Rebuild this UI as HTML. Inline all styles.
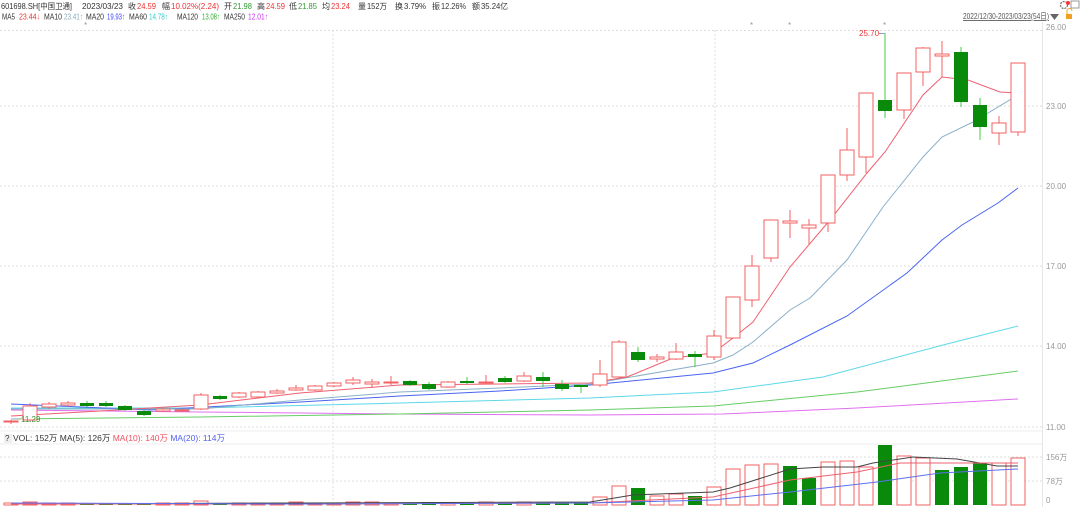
<!DOCTYPE html>
<html><head><meta charset="utf-8"><style>
body{margin:0;width:1080px;height:507px;background:#fff;overflow:hidden;font-family:"Liberation Sans","Noto Sans CJK SC",sans-serif;}
svg{position:absolute;left:0;top:0}
text{font-family:"Liberation Sans","Noto Sans CJK SC",sans-serif;}
</style></head><body>
<svg width="1080" height="507" viewBox="0 0 1080 507" xmlns="http://www.w3.org/2000/svg">
<!-- header line 1 -->
<g font-size="8" fill="#333">
<text x="1" y="9" textLength="71" lengthAdjust="spacingAndGlyphs">601698.SH[中国卫通]</text>
<text x="82" y="9" textLength="41" lengthAdjust="spacingAndGlyphs">2023/03/23</text>
<text x="128" y="9">收</text><text x="137" y="9" fill="#e33" textLength="19" lengthAdjust="spacingAndGlyphs">24.59</text>
<text x="162" y="9">幅</text><text x="171" y="9" fill="#e33" textLength="48" lengthAdjust="spacingAndGlyphs">10.02%(2.24)</text>
<text x="224" y="9">开</text><text x="233" y="9" fill="#393" textLength="19" lengthAdjust="spacingAndGlyphs">21.98</text>
<text x="257" y="9">高</text><text x="266" y="9" fill="#e33" textLength="19" lengthAdjust="spacingAndGlyphs">24.59</text>
<text x="289" y="9">低</text><text x="298" y="9" fill="#393" textLength="19" lengthAdjust="spacingAndGlyphs">21.85</text>
<text x="322" y="9">均</text><text x="331" y="9" fill="#e33" textLength="19" lengthAdjust="spacingAndGlyphs">23.24</text>
<text x="358" y="9">量</text><text x="367" y="9" textLength="20" lengthAdjust="spacingAndGlyphs">152万</text>
<text x="395" y="9">换</text><text x="404" y="9" textLength="22" lengthAdjust="spacingAndGlyphs">3.79%</text>
<text x="432" y="9">振</text><text x="441" y="9" textLength="25" lengthAdjust="spacingAndGlyphs">12.26%</text>
<text x="472" y="9">额</text><text x="481" y="9" textLength="27" lengthAdjust="spacingAndGlyphs">35.24亿</text>
</g>
<!-- header line 2 -->
<g font-size="8.5" fill="#333">
<text x="2" y="19.5" textLength="13" lengthAdjust="spacingAndGlyphs">MA5</text><text x="19" y="19.5" fill="#e33" textLength="21" lengthAdjust="spacingAndGlyphs">23.44↓</text>
<text x="44" y="19.5" textLength="18" lengthAdjust="spacingAndGlyphs">MA10</text><text x="64" y="19.5" fill="#8ab" textLength="19" lengthAdjust="spacingAndGlyphs">23.41↑</text>
<text x="86" y="19.5" textLength="18" lengthAdjust="spacingAndGlyphs">MA20</text><text x="107" y="19.5" fill="#44f" textLength="18" lengthAdjust="spacingAndGlyphs">19.93↑</text>
<text x="129" y="19.5" textLength="18" lengthAdjust="spacingAndGlyphs">MA60</text><text x="149" y="19.5" fill="#3cc" textLength="19" lengthAdjust="spacingAndGlyphs">14.78↑</text>
<text x="177" y="19.5" textLength="21" lengthAdjust="spacingAndGlyphs">MA120</text><text x="202" y="19.5" fill="#3a3" textLength="18" lengthAdjust="spacingAndGlyphs">13.08↑</text>
<text x="224" y="19.5" textLength="21" lengthAdjust="spacingAndGlyphs">MA250</text><text x="248" y="19.5" fill="#c3e" textLength="20" lengthAdjust="spacingAndGlyphs">12.01↑</text>
<text x="963" y="19" fill="#555" text-decoration="underline" textLength="86" lengthAdjust="spacingAndGlyphs">2022/12/30-2023/03/23(54日)</text>
</g>
<path d="M1050 14h9l-4.5 6z" fill="#666"/>
<rect x="1066" y="14" width="6" height="5" fill="#f0a020"/><path d="M1067 14v-3a2.5 2.5 0 0 1 5 0" stroke="#f0a020" fill="none"/>
<circle cx="1064" cy="5" r="3.5" fill="none" stroke="#777" stroke-width="1.3" stroke-dasharray="2 1"/><circle cx="1068" cy="3" r="2" fill="#f33"/>
<rect x="1071" y="1" width="8" height="7" fill="none" stroke="#999"/>
<!-- grid -->
<g stroke="#ddd" stroke-dasharray="2 2" stroke-width="1">
<line x1="0" y1="30.5" x2="1042" y2="30.5"/>
<line x1="0" y1="106" x2="1042" y2="106"/>
<line x1="0" y1="186" x2="1042" y2="186"/>
<line x1="0" y1="266" x2="1042" y2="266"/>
<line x1="0" y1="346" x2="1042" y2="346"/>
<line x1="0" y1="427" x2="1042" y2="427"/>
<line x1="0" y1="457" x2="1042" y2="457"/>
<line x1="0" y1="481" x2="1042" y2="481"/>
<line x1="333" y1="30" x2="333" y2="507"/>
<line x1="715" y1="30" x2="715" y2="507"/>
</g>
<line x1="0" y1="431" x2="1042" y2="431" stroke="#eee"/>
<line x1="0" y1="444" x2="1042" y2="444" stroke="#eee"/>
<line x1="1042.5" y1="22" x2="1042.5" y2="507" stroke="#e6e6e6"/>
<g font-size="8" fill="#999">
<text x="1046" y="30">26.00</text><text x="1046" y="109">23.00</text><text x="1046" y="189">20.00</text>
<text x="1046" y="269">17.00</text><text x="1046" y="349">14.00</text><text x="1046" y="430">11.00</text>
<text x="1046" y="460">156万</text><text x="1046" y="484">78万</text><text x="1046" y="503">0</text>
</g>
<g fill="#999" font-size="8"><text x="84" y="28">*</text><text x="750" y="28">*</text><text x="788" y="28">*</text><text x="883" y="28">*</text></g>
<!-- MA lines -->
<g fill="none" stroke-width="1">
<polyline stroke="#e070f0" points="11,410 200,412 400,414 590,415 723,414 857,408 1018,399"/>
<polyline stroke="#6c6" points="11,419 200,417 400,414 590,410 713,406 857,392 1018,371"/>
<polyline stroke="#5dd8e8" points="11,408 200,408 400,403 590,398 713,392 823,377 943,345 1018,326"/>
<polyline stroke="#4a64f0" points="11,404 150,410 300,402 400,396 500,391 590,385 713,373 753,363 790,345 847,316 907,273 942,240 962,225 998,203 1018,188"/>
<polyline stroke="#8ab0c8" points="11,409 200,409 300,400 400,392 500,388 590,384 713,363 733,355 753,342 790,310 810,298 847,260 883,207 923,157 942,137 973,122 1018,95"/>
<polyline stroke="#ee6070" points="11,416 100,411 200,405 300,393 400,385 500,384 590,383 627,377 673,358 713,353 733,338 753,322 790,267 830,220 867,173 885,152 923,95 942,77 968,80 1000,92 1018,93"/>
</g>
<!-- candles -->
<g stroke="#f26060" fill="#fff" stroke-width="1">
<path d="M11 420v4M30 403v19M49 402v7M68 401v6M163 408v4M182 409v3M201 393v17M239 392v6M258 391v7M277 389v5M296 385v6M315 385v6M334 382v5M353 377v8M372 379v8M391 376v9M448 381v7M486 375v9M524 372v10M600 360v27M619 340v38M657 354v8M676 343v17M714 330v30M733 297v41M752 255v52M771 220v42M790 210v28M809 219v25M828 175v57M847 128v53M866 93v80M904 73v46M923 47v39M942 41v36M999 116v29M1018 63v73"/>
<rect x="4" y="421" width="14" height="1"/><rect x="23" y="406" width="14" height="14"/><rect x="42" y="404" width="14" height="3"/><rect x="61" y="403" width="14" height="2"/>
<rect x="156" y="409" width="14" height="2"/><rect x="175" y="410" width="14" height="1"/><rect x="194" y="395" width="14" height="14"/>
<rect x="232" y="393" width="14" height="4"/><rect x="251" y="392" width="14" height="5"/><rect x="270" y="391" width="14" height="2"/><rect x="289" y="388" width="14" height="2"/>
<rect x="308" y="386" width="14" height="4"/><rect x="327" y="383" width="14" height="3"/><rect x="346" y="380" width="14" height="3"/><rect x="365" y="382" width="14" height="2"/>
<rect x="384" y="382" width="14" height="1"/><rect x="441" y="382" width="14" height="5"/><rect x="479" y="382" width="14" height="1"/><rect x="517" y="376" width="14" height="5"/>
<rect x="593" y="374" width="14" height="11"/><rect x="612" y="342" width="14" height="35"/><rect x="650" y="357" width="14" height="2"/><rect x="669" y="352" width="14" height="7"/>
<rect x="707" y="336" width="14" height="21"/><rect x="726" y="297" width="14" height="41"/><rect x="745" y="266" width="14" height="34"/><rect x="764" y="220" width="14" height="38"/>
<rect x="783" y="221" width="14" height="2"/><rect x="802" y="225" width="14" height="3"/><rect x="821" y="175" width="14" height="48"/><rect x="840" y="150" width="14" height="25"/>
<rect x="859" y="93" width="14" height="64"/><rect x="897" y="73" width="14" height="37"/><rect x="916" y="48" width="14" height="24"/><rect x="935" y="54" width="14" height="2"/>
<rect x="992" y="123" width="14" height="10"/><rect x="1011" y="63" width="14" height="69"/>
</g>
<g stroke="#4c4" stroke-width="1"><path d="M87 401v6M106 401v6M125 405v6M144 410v6M220 395v5M410 380v6M429 382v8M467 377v7M505 376v7M543 372v15M562 380v11M581 386v7M638 347v15M695 351v16M885 33v85M961 47v60M980 98v42"/></g>
<g fill="#0a8a0a">
<rect x="80" y="403" width="14" height="3"/><rect x="99" y="403" width="14" height="3"/><rect x="118" y="406" width="14" height="4"/><rect x="137" y="411" width="14" height="4"/>
<rect x="213" y="396" width="14" height="3"/><rect x="403" y="381" width="14" height="4"/><rect x="422" y="384" width="14" height="5"/><rect x="460" y="381" width="14" height="2"/>
<rect x="498" y="378" width="14" height="4"/><rect x="536" y="377" width="14" height="4"/><rect x="555" y="384" width="14" height="5"/><rect x="574" y="385" width="14" height="2"/>
<rect x="631" y="352" width="14" height="8"/><rect x="688" y="354" width="14" height="3"/><rect x="878" y="100" width="14" height="11"/><rect x="954" y="52" width="14" height="50"/><rect x="973" y="105" width="14" height="22"/>
</g>
<path d="M885 33.5h-6" stroke="#8ab"/><text x="859" y="36" font-size="8" fill="#e33">25.70</text>
<text x="21" y="422" font-size="8" fill="#393">11.29</text><path d="M20 419h-8" stroke="#8ab"/>
<!-- volume header -->
<rect x="4" y="434" width="8" height="9" fill="#eee"/><text x="5" y="441" font-size="8" fill="#333">?</text>
<text x="13" y="441" font-size="8.5" fill="#333">VOL: 152万 MA(5): 126万 <tspan fill="#ee5060">MA(10): 140万</tspan> <tspan fill="#5060f0">MA(20): 114万</tspan></text>
<!-- volume bars -->
<g stroke="#f26060" fill="#fff">
<rect x="4" y="503" width="14" height="2"/><rect x="23" y="502" width="14" height="3"/><rect x="42" y="503" width="14" height="2"/><rect x="61" y="503" width="14" height="2"/>
<rect x="156" y="503" width="14" height="2"/><rect x="175" y="503" width="14" height="2"/><rect x="194" y="501" width="14" height="4"/><rect x="232" y="503" width="14" height="2"/>
<rect x="251" y="503" width="14" height="2"/><rect x="270" y="503" width="14" height="2"/><rect x="289" y="502" width="14" height="3"/><rect x="308" y="503" width="14" height="2"/>
<rect x="327" y="503" width="14" height="2"/><rect x="346" y="502" width="14" height="3"/><rect x="365" y="502" width="14" height="3"/><rect x="384" y="503" width="14" height="2"/>
<rect x="441" y="503" width="14" height="2"/><rect x="479" y="502" width="14" height="3"/><rect x="517" y="502" width="14" height="3"/>
<rect x="593" y="497" width="14" height="8"/><rect x="612" y="486" width="14" height="19"/><rect x="650" y="496" width="14" height="9"/><rect x="669" y="494" width="14" height="11"/>
<rect x="707" y="487" width="14" height="18"/><rect x="726" y="469" width="14" height="36"/><rect x="745" y="465" width="14" height="40"/><rect x="764" y="464" width="14" height="41"/>
<rect x="821" y="462" width="14" height="43"/><rect x="840" y="461" width="14" height="44"/><rect x="859" y="467" width="14" height="38"/><rect x="897" y="456" width="14" height="49"/>
<rect x="916" y="458" width="14" height="47"/><rect x="992" y="463" width="14" height="42"/><rect x="1011" y="458" width="14" height="47"/>
</g>
<g fill="#0a8a0a">
<rect x="80" y="503" width="14" height="2"/><rect x="99" y="503" width="14" height="2"/><rect x="118" y="503" width="14" height="2"/><rect x="137" y="503" width="14" height="2"/>
<rect x="213" y="503" width="14" height="2"/><rect x="403" y="503" width="14" height="2"/><rect x="422" y="502" width="14" height="3"/><rect x="460" y="503" width="14" height="2"/>
<rect x="498" y="503" width="14" height="2"/><rect x="536" y="502" width="14" height="3"/><rect x="555" y="503" width="14" height="2"/><rect x="574" y="503" width="14" height="2"/>
<rect x="631" y="488" width="14" height="17"/><rect x="688" y="496" width="14" height="9"/><rect x="783" y="466" width="14" height="39"/><rect x="802" y="478" width="14" height="27"/>
<rect x="878" y="445" width="14" height="60"/><rect x="935" y="470" width="14" height="35"/><rect x="954" y="467" width="14" height="38"/><rect x="973" y="463" width="14" height="42"/>
</g>
<g fill="none">
<polyline stroke="#444" points="11,504 300,503 590,502 633,495 713,492 730,488 790,469 823,467 857,467 873,463 913,457 957,459 997,466 1018,466"/>
<polyline stroke="#ee6070" points="11,504 300,504 590,503 713,497 790,480 857,472 900,463 940,463 1018,463"/>
<polyline stroke="#5a70f0" points="11,503 300,504 590,503 713,500 790,492 877,482 940,473 1018,469"/>
</g>
</svg>
</body></html>
